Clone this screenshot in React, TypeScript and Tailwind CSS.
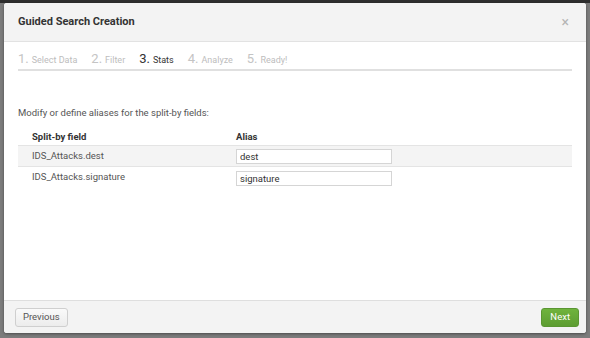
import { useState } from 'react'

const steps = [
  { num: '1.', label: 'Select Data' },
  { num: '2.', label: 'Filter' },
  { num: '3.', label: 'Stats', active: true },
  { num: '4.', label: 'Analyze' },
  { num: '5.', label: 'Ready!' },
]

const rows = [
  { field: 'IDS_Attacks.dest', alias: 'dest' },
  { field: 'IDS_Attacks.signature', alias: 'signature' },
]

export default function App() {
  const [aliases, setAliases] = useState(rows.map(r => r.alias))

  return (
    <div className="w-[590px] h-[338px] bg-[#7c7c7c] flex flex-col font-['Roboto',sans-serif] overflow-hidden">
      <div className="h-[3px] bg-[#2e2e2e]" />
      <div className="flex-1 px-[4px] pb-[5px] flex">
        {/* Modal */}
        <div className="flex-1 flex flex-col bg-white rounded-[3px] overflow-hidden shadow-[0_1px_3px_rgba(0,0,0,0.4)]">
          {/* Header */}
          <div className="h-[39px] bg-[#f3f3f3] border-b border-[#e2e2e2] flex items-center justify-between pl-[14px] pr-[17px]">
            <span className="text-[11px] font-bold text-[#333]">Guided Search Creation</span>
            <span className="text-[14px] leading-none text-[#b5b5b5]">×</span>
          </div>

          {/* Body */}
          <div className="flex-1 px-[14px]">
            <div className="flex items-end gap-[14px] h-[29px] pb-[1px] border-b-2 border-[#e0e0e0]">
              {steps.map(s => (
                <div key={s.num} className="flex items-baseline gap-[3px]">
                  <span className={`text-[13px] ${s.active ? 'text-[#333]' : 'text-[#c4c4c4]'}`}>{s.num}</span>
                  <span className={`text-[9px] ${s.active ? 'text-[#333]' : 'text-[#bdbdbd]'}`}>{s.label}</span>
                </div>
              ))}
            </div>

            <p className="mt-[35px] text-[9.5px] text-[#555]">Modify or define aliases for the split-by fields:</p>

            <div className="mt-[9px]">
              <div className="flex h-[16px] items-center text-[9.5px] font-bold text-[#333]">
                <div className="w-[218px] pl-[14px]">Split-by field</div>
                <div>Alias</div>
              </div>
              {rows.map((r, i) => (
                <div
                  key={r.field}
                  className={`flex h-[22px] items-center text-[9.5px] text-[#555] ${i === 0 ? 'bg-[#f4f4f4] border-y border-[#e4e4e4]' : ''}`}
                >
                  <div className="w-[218px] pl-[14px] self-start pt-[3px]">{r.field}</div>
                  <input
                    value={aliases[i]}
                    onChange={e => setAliases(aliases.map((a, j) => (j === i ? e.target.value : a)))}
                    className="w-[156px] h-[15px] px-[3px] bg-white border border-[#d5d5d5] text-[9.5px] text-[#333] outline-none"
                  />
                </div>
              ))}
            </div>
          </div>

          {/* Footer */}
          <div className="h-[33px] bg-[#f3f3f3] border-t border-[#dedede] flex items-center justify-between pl-[11px] pr-[7px]">
            <button className="h-[19px] px-[7px] rounded-[3px] border border-[#cfcfcf] bg-gradient-to-b from-[#fafafa] to-[#ececec] text-[9.5px] text-[#555]">
              Previous
            </button>
            <button className="h-[19px] px-[8px] rounded-[3px] border border-[#5a9632] bg-gradient-to-b from-[#6fb33d] to-[#5d9d32] text-[9.5px] text-white">
              Next
            </button>
          </div>
        </div>
      </div>
    </div>
  )
}
